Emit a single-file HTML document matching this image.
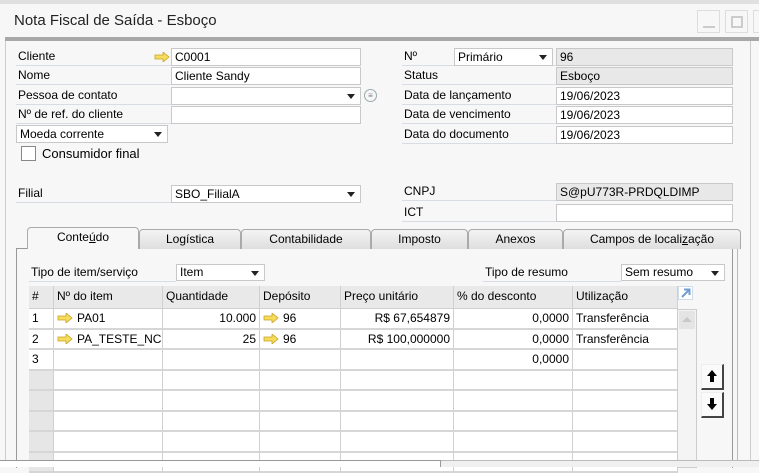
<!DOCTYPE html>
<html><head><meta charset="utf-8"><style>
*{margin:0;padding:0;box-sizing:border-box}
body{width:759px;height:467px;overflow:hidden;background:#f7f7f7;font-family:"Liberation Sans",Tahoma,sans-serif;font-size:12px;color:#000;position:relative}
.a{position:absolute}
.lbl{position:absolute;height:18px;line-height:17px;border-bottom:1px solid #d8dde3;padding-left:2px;white-space:nowrap}
.in{position:absolute;height:18px;line-height:16px;background:#fff;border:1px solid #c8c8c8;padding-left:3px;white-space:nowrap;overflow:hidden}
.ro{background:#e8e8e8}
.dd::after{content:"";position:absolute;right:5px;top:6px;border-left:4px solid transparent;border-right:4px solid transparent;border-top:5px solid #222}
.tab{position:absolute;top:229px;height:20px;border:1px solid #aaa;border-bottom:none;border-radius:4px 4px 0 0;background:linear-gradient(#f4f4f4,#dedede);text-align:center;line-height:19px}
.arr{display:inline-block;width:16px;height:10px;vertical-align:-1px;margin-right:4px}
.g{position:absolute;border-right:1px solid #d0d0d0;border-bottom:2px solid #d6d6d6;height:20.5px;line-height:18px;padding:0 3px;white-space:nowrap;overflow:hidden;background:#fff}
.h{background:#e9e9e9;height:23px;line-height:21px;border-bottom:1px solid #d0d0d0}
.btn{position:absolute;left:701px;width:23px;height:26px;border-right:2px solid #444;border-bottom:2px solid #444;border-top:1px solid #eee;border-left:1px solid #eee;background:#fafafa}
</style></head><body>
<div class="a" style="left:0;top:0;width:759px;height:4px;background:#e0e0e0"></div>
<div class="a" style="left:5px;top:4px;width:754px;height:34px;background:#f7f7f7"></div>
<div class="a" style="left:14px;top:12px;font-size:15px;color:#222">Nota Fiscal de Saída - Esboço</div>
<div class="a" style="left:697px;top:10px;width:23px;height:23px;border:1px solid #ddd"><div class="a" style="left:5px;top:15px;width:12px;height:2px;background:#ccc"></div></div>
<div class="a" style="left:725px;top:10px;width:23px;height:23px;border:1px solid #ddd"><div class="a" style="left:5px;top:5px;width:12px;height:12px;border:2px solid #ccc"></div></div>
<div class="a" style="left:753px;top:10px;width:10px;height:23px;border:1px solid #ddd"></div>
<div class="a" style="left:5px;top:37px;width:754px;height:4px;background:#a8a8a8"></div>
<div class="a" style="left:5px;top:41px;width:1px;height:426px;background:#ccc"></div>
<div class="a" style="left:750px;top:41px;width:1px;height:426px;background:#ccc"></div>

<div class="lbl" style="left:16px;top:48px;width:155px">Cliente</div>
<svg class="a" style="left:154px;top:52px" width="16" height="10"><path d="M1 3h8V0l6 5-6 5V7H1z" fill="#f5dc5a" stroke="#c9a227" stroke-width=".8"/></svg>
<div class="in" style="left:171px;top:48px;width:190px">C0001</div>
<div class="lbl" style="left:16px;top:67px;width:155px">Nome</div>
<div class="in" style="left:171px;top:67px;width:190px">Cliente Sandy</div>
<div class="lbl" style="left:16px;top:87px;width:155px">Pessoa de contato</div>
<div class="in dd" style="left:171px;top:87px;width:190px"></div>
<div class="a" style="left:364px;top:89px;width:13px;height:13px;border:1px solid #9aa;border-radius:50%;font-size:8px;line-height:11px;text-align:center;color:#778">≡</div>
<div class="lbl" style="left:16px;top:106px;width:155px">Nº de ref. do cliente</div>
<div class="in" style="left:171px;top:106px;width:190px"></div>
<div class="in dd" style="left:16px;top:125px;width:152px">Moeda corrente</div>
<div class="a" style="left:21px;top:146px;width:15px;height:15px;border:1px solid #888;background:#fff"></div>
<div class="a" style="left:42px;top:146px;font-size:13px">Consumidor final</div>
<div class="lbl" style="left:16px;top:185px;width:155px">Filial</div>
<div class="in dd" style="left:171px;top:185px;width:190px">SBO_FilialA</div>

<div class="lbl" style="left:402px;top:48px;width:154px">Nº</div>
<div class="in dd" style="left:454px;top:48px;width:99px;background:#fff">Primário</div>
<div class="in ro" style="left:556px;top:48px;width:177px">96</div>
<div class="lbl" style="left:402px;top:67px;width:154px">Status</div>
<div class="in ro" style="left:556px;top:67px;width:177px">Esboço</div>
<div class="lbl" style="left:402px;top:87px;width:154px">Data de lançamento</div>
<div class="in" style="left:556px;top:87px;width:177px">19/06/2023</div>
<div class="lbl" style="left:402px;top:106px;width:154px">Data de vencimento</div>
<div class="in" style="left:556px;top:106px;width:177px">19/06/2023</div>
<div class="lbl" style="left:402px;top:126px;width:154px">Data do documento</div>
<div class="in" style="left:556px;top:126px;width:177px">19/06/2023</div>
<div class="lbl" style="left:402px;top:183px;width:154px">CNPJ</div>
<div class="in ro" style="left:556px;top:183px;width:177px">S@pU773R-PRDQLDIMP</div>
<div class="lbl" style="left:402px;top:204px;width:154px">ICT</div>
<div class="in" style="left:556px;top:204px;width:177px"></div>

<div class="a" style="left:16px;top:248px;width:717px;height:220px;border:1px solid #999;border-bottom:none;background:#f7f7f7"></div>
<div class="a" style="left:737px;top:248px;width:1px;height:219px;background:#bbb"></div>
<div class="tab" style="left:27px;width:112px;background:#f7f7f7;height:22px;top:227px;z-index:2">Conte<u>ú</u>do</div>
<div class="tab" style="left:139px;width:102px">Lo<u>g</u>ística</div>
<div class="tab" style="left:241px;width:130px">Contabilidade</div>
<div class="tab" style="left:371px;width:97px">Imposto</div>
<div class="tab" style="left:468px;width:95px">Anexos</div>
<div class="tab" style="left:563px;width:178px">Campos de locali<u>z</u>ação</div>

<div class="lbl" style="left:29px;top:264px;width:147px">Tipo de item/serviço</div>
<div class="in dd" style="left:176px;top:264px;width:89px;height:17px;line-height:15px">Item</div>
<div class="lbl" style="left:483px;top:264px;width:138px">Tipo de resumo</div>
<div class="in dd" style="left:621px;top:264px;width:104px;height:17px;line-height:15px">Sem resumo</div>

<div class="a" style="left:29px;top:286px;width:649px;height:182px;background:#fff;border-left:1px solid #ccc;border-top:1px solid #ccc"></div>
<div class="g h" style="left:29px;top:286px;width:25px">#</div>
<div class="g h" style="left:54px;top:286px;width:109px">Nº do item</div>
<div class="g h" style="left:163px;top:286px;width:97px">Quantidade</div>
<div class="g h" style="left:260px;top:286px;width:81px">Depósito</div>
<div class="g h" style="left:341px;top:286px;width:113px">Preço unitário</div>
<div class="g h" style="left:454px;top:286px;width:119px">% do desconto</div>
<div class="g h" style="left:573px;top:286px;width:105px">Utilização</div>

<div id="rows"></div>
<script>
var d=[["1","PA01","10.000","96","R$ 67,654879","0,0000","Transferência"],["2","PA_TESTE_NC","25","96","R$ 100,000000","0,0000","Transferência"],["3","","","","","0,0000",""],["","","","","","",""],["","","","","","",""],["","","","","","",""],["","","","","","",""],["","","","","","",""]];
var xs=[29,54,163,260,341,454,573],ws=[25,109,97,81,113,119,105];
var ar='<svg class="arr" viewBox="0 0 16 10"><path d="M1 3h8V0l6 5-6 5V7H1z" fill="#f5dc5a" stroke="#c9a227" stroke-width=".8"/></svg>';
var h="";
for(var r=0;r<d.length;r++){var y=309+r*20.5;for(var c=0;c<7;c++){var t=d[r][c];var st="left:"+xs[c]+"px;top:"+y+"px;width:"+ws[c]+"px;";if(c==0)st+="background:"+(t?"#fff":"#e6e6e6")+";";if(c==2||c==4||c==5)st+="text-align:right;";if((c==1||c==3)&&t)t=ar+t;h+='<div class="g" style="'+st+'">'+t+'</div>';}}
document.getElementById("rows").innerHTML=h;
</script>
<div class="a" style="left:677px;top:309px;width:20px;height:159px;border:1px solid #ccc;background:#f4f4f4"></div>
<div class="a" style="left:679px;top:311px;width:16px;height:18px;background:#e4e4e4"><div class="a" style="left:3px;top:6px;border-left:5px solid transparent;border-right:5px solid transparent;border-bottom:5px solid #c8c8c8"></div></div>
<svg class="a" style="left:678px;top:286px" width="15" height="14"><rect x=".5" y=".5" width="14" height="13" fill="#fff" stroke="#cfdcea"/><path d="M4 11l7-7M6 3.5h5.5V9" stroke="#6f9ed2" stroke-width="2" fill="none"/></svg>
<div class="btn" style="top:364px"></div>
<div class="btn" style="top:392px"></div>
<svg class="a" style="left:705px;top:367px" width="14" height="18"><path d="M7 3l5 6H9v6H5V9H2z" fill="#000"/></svg>
<svg class="a" style="left:705px;top:395px" width="14" height="18"><path d="M7 15l5-6H9V3H5v6H2z" fill="#000"/></svg>

<div class="a" style="left:0;top:460px;width:759px;height:7px;background:#f0f0f0;border-top:1px solid #bbb;z-index:5"></div>
<div class="a" style="left:0;top:460px;width:441px;height:7px;background:#fff;border-top:1px solid #999;border-right:1px solid #999;z-index:6"></div>
</body></html>
